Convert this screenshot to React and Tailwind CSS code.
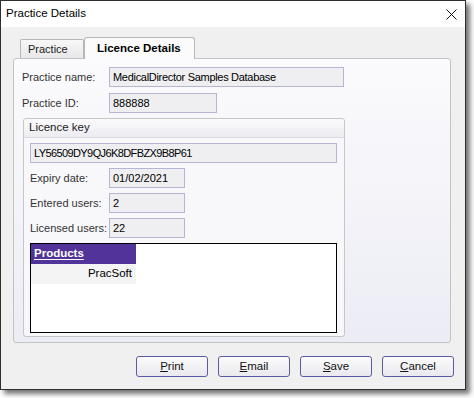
import React from 'react'

const font = { fontFamily: '"Liberation Sans", Arial, sans-serif' }

function Field({ label, value, width, labelWidth = 'w-[87px]', track = '' }) {
  return (
    <div className="flex items-center h-[20px]">
      <div className={`${labelWidth} shrink-0 text-[11px] text-[#333]`}>{label}</div>
      <div className={`${width} h-[20px] border border-[#b5b5d6] bg-[#efeff1] flex items-center pl-[3px] text-[11px] text-black ${track}`}>
        {value}
      </div>
    </div>
  )
}

function Btn({ u, rest }) {
  return (
    <button className="w-[72px] h-[21px] rounded-[3px] border border-[#5b5ba3] bg-gradient-to-b from-[#fbfbfb] to-[#e9e9ee] text-[11.5px] text-[#111] flex items-center justify-center">
      <span className="underline underline-offset-1">{u}</span>{rest}
    </button>
  )
}

export default function App() {
  return (
    <div className="w-[474px] h-[398px] bg-white" style={font}>
      <div className="w-[466px] h-[390px] border border-[#2e2e2e] flex flex-col shadow-[4px_4px_5px_rgba(0,0,0,0.55)]">
        <div className="h-[26px] bg-white flex items-center justify-between pl-[5px] pr-[6px]">
          <span className="text-[11.5px] text-black">Practice Details</span>
          <svg width="11" height="11" viewBox="0 0 11 11" className="mr-[2px]">
            <path d="M0.5 0.5 L10.5 10.5 M10.5 0.5 L0.5 10.5" stroke="#111" strokeWidth="1" />
          </svg>
        </div>
        <div className="flex-1 bg-[#f0f0f0] flex flex-col pl-[12px] pr-[11px] pt-[10px]">
          <div className="flex items-end ml-[7px] h-[21px]">
            <div className="w-[64px] h-[19px] border border-b-0 border-[#b7b7b7] rounded-t-[2px] bg-gradient-to-b from-[#f7f7f7] to-[#e8e8e8] flex items-center pl-[7px] text-[11px] text-[#222]">
              Practice
            </div>
            <div className="w-[111px] h-[22px] border border-b-0 border-[#b7b7b7] rounded-t-[3px] bg-[#fbfbfc] flex items-center pl-[12px] text-[11.5px] font-bold text-black -mb-px relative z-10">
              Licence Details
            </div>
          </div>
          <div className="w-[438px] h-[285px] border border-[#c4c4c4] rounded-[3px] bg-gradient-to-b from-[#fbfbfd] to-[#ececf5] pl-[8px] pt-[8px] flex flex-col gap-[6px]">
            <Field label="Practice name:" value="MedicalDirector Samples Database" width="w-[235px]" track="tracking-[-0.3px]" />
            <Field label="Practice ID:" value="888888" width="w-[108px]" />
            <div className="w-[322px] h-[219px] ml-px -mt-px border border-[#c6c6c6] rounded-[3px] bg-[#f8f8fa] flex flex-col">
              <div className="h-[19px] border-b border-[#d9d9e2] bg-gradient-to-b from-[#fbfbfc] to-[#ececf1] flex items-center pl-[5px] text-[11.5px] text-[#222] rounded-t-[3px]">
                Licence key
              </div>
              <div className="pl-[6px] pt-[5px] flex flex-col gap-[5px]">
                <div className="w-[307px] h-[20px] border border-[#b5b5d6] bg-[#efeff1] flex items-center pl-[3px] text-[11px] tracking-[-0.6px] text-black">
                  LY56509DY9QJ6K8DFBZX9B8P61
                </div>
                <Field label="Expiry date:" value="01/02/2021" width="w-[76px]" labelWidth="w-[79px]" />
                <Field label="Entered users:" value="2" width="w-[76px]" labelWidth="w-[79px]" />
                <Field label="Licensed users:" value="22" width="w-[76px]" labelWidth="w-[79px]" />
                <div className="w-[307px] h-[90px] border border-black bg-white">
                  <div className="w-[105px] h-[20px] bg-[#51339a] flex items-center pl-[3px] text-[11.5px] font-bold text-white underline underline-offset-2">
                    Products
                  </div>
                  <div className="w-[105px] h-[20px] bg-[#f4f4f4] flex items-center justify-end pr-[4px] text-[11.5px] text-black">
                    PracSoft
                  </div>
                </div>
              </div>
            </div>
          </div>
          <div className="flex justify-end gap-[10px] mt-[13px]">
            <Btn u="P" rest="rint" />
            <Btn u="E" rest="mail" />
            <Btn u="S" rest="ave" />
            <Btn u="C" rest="ancel" />
          </div>
        </div>
      </div>
    </div>
  )
}
